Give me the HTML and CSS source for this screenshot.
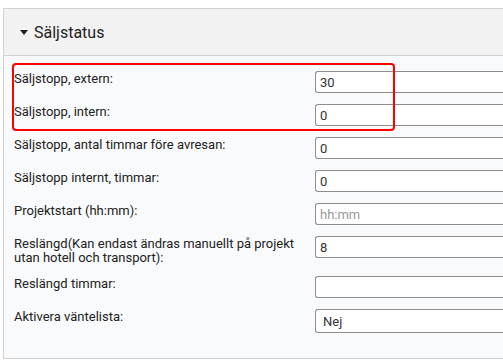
FILE: index.html
```html
<!DOCTYPE html>
<html lang="sv">
<head>
  <meta charset="UTF-8">
  <title>Säljstatus</title>
  <link rel="stylesheet" href="styles.css">
</head>
<body>
  <div class="panel">
    <div class="panel-heading">
      <svg class="caret" width="8" height="5" viewBox="0 0 8 5"><path d="M0 0 H8 L4 5 Z" fill="#222"/></svg>
      <span>Säljstatus</span>
    </div>

    <div class="panel-body">
      <div class="highlight"></div>

      <div class="form-row">
        <label for="stopExt">Säljstopp, extern:</label>
        <input id="stopExt" type="text" value="30">
      </div>
      <div class="form-row">
        <label for="stopInt">Säljstopp, intern:</label>
        <input id="stopInt" type="text" value="0">
      </div>
      <div class="form-row">
        <label for="stopHours">Säljstopp, antal timmar före avresan:</label>
        <input id="stopHours" type="text" value="0">
      </div>
      <div class="form-row">
        <label for="stopIntHours">Säljstopp internt, timmar:</label>
        <input id="stopIntHours" type="text" value="0">
      </div>
      <div class="form-row">
        <label for="projStart">Projektstart (hh:mm):</label>
        <input id="projStart" type="text" placeholder="hh:mm">
      </div>
      <div class="form-row">
        <label for="tripLength">Reslängd(Kan endast ändras manuellt på projekt utan hotell och transport):</label>
        <input id="tripLength" type="text" value="8">
      </div>
      <div class="form-row">
        <label for="tripHours">Reslängd timmar:</label>
        <input id="tripHours" type="text" value="">
      </div>
      <div class="form-row">
        <label for="waitlist">Aktivera väntelista:</label>
        <select id="waitlist">
          <option value="0" selected>Nej</option>
          <option value="1">Ja</option>
        </select>
      </div>
    </div>
  </div>
</body>
</html>
```

FILE: styles.css
```css
body {
  margin: 8px 0 0 3px;
  background: #fff;
  font-family: Roboto, "Liberation Sans", Arial, sans-serif;
  color: #222;
}
.panel {
  overflow: hidden;
  border: 1px solid #d3d3d3;
  border-right: none;
  background: #f9fafc;
}
.panel-heading {
  display: flex;
  align-items: center;
  gap: 6px;
  height: 46px;
  padding-left: 16px;
  background: #f2f2f2;
  border-bottom: 1px solid #d3d3d3;
  font-size: 16px;
}
.caret {
  display: block;
}
.panel-body {
  position: relative;
  padding: 15px 0 14px 10px;
}
.highlight {
  position: absolute;
  left: 8px;
  top: 7px;
  width: 383px;
  height: 68px;
  box-sizing: border-box;
  border: 2px solid #f00;
  border-radius: 4px;
  pointer-events: none;
}
.form-row {
  display: grid;
  grid-template-columns: 296px 1fr;
  column-gap: 5px;
  align-items: start;
  margin-bottom: 11px;
}
.form-row label {
  font-size: 13px;
  line-height: 14px;
  padding-top: 1px;
}
.form-row input,
.form-row select {
  box-sizing: border-box;
  width: 100%;
  height: 22px;
  border: 1px solid #8e8e8e;
  border-right: none;
  border-radius: 3px 0 0 3px;
  background: #fff;
  padding: 0 4px;
  font-family: Roboto, "Liberation Sans", Arial, sans-serif;
  font-size: 13px;
  color: #333;
}
.form-row input::placeholder {
  color: #999;
}
.form-row select {
  appearance: none;
  height: 24px;
  padding-left: 7px;
}
```
